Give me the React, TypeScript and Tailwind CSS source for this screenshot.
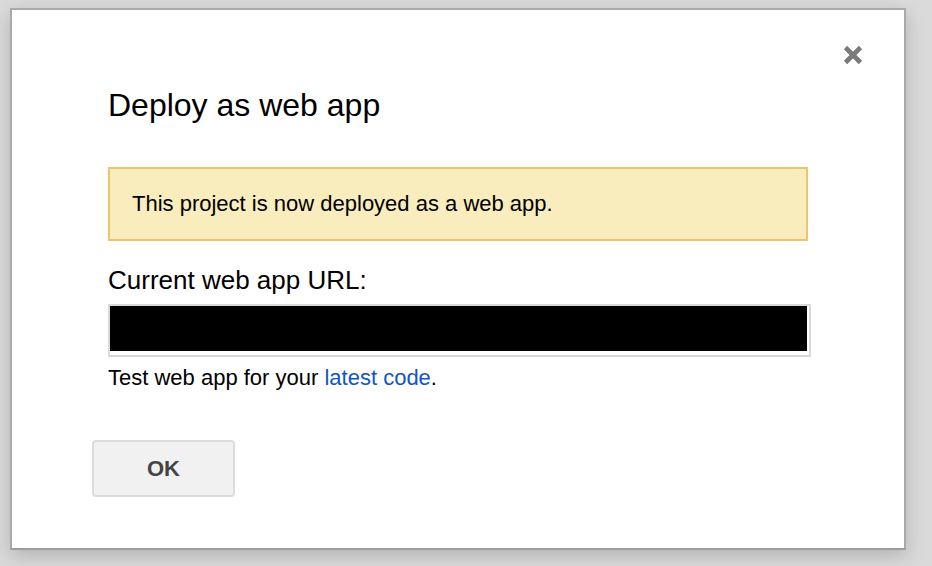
import React from "react";

export default function App() {
  return (
    <div
      className="w-[932px] h-[566px] bg-[#dadada] pt-[8px] pl-[10px] overflow-hidden"
      style={{ fontFamily: '"Liberation Sans", Arial, sans-serif' }}
    >
      <div className="relative w-[896px] h-[542px] bg-white border-2 border-[#a9a9a9] border-b-[#9c9c9c] shadow-[0_6px_18px_rgba(0,0,0,0.18)]">
        <button className="absolute top-[34px] right-[40px] w-[22px] h-[22px] flex items-center justify-center">
          <svg width="22" height="22" viewBox="0 0 22 22">
            <path
              d="M3.5 3.5 L18.5 18.5 M18.5 3.5 L3.5 18.5"
              stroke="#7a7a7a"
              strokeWidth="4.6"
              strokeLinecap="butt"
            />
          </svg>
        </button>

        <div className="pl-[96px] pt-[77px]">
          <h1 className="text-[32px] leading-[36px] text-black font-normal">Deploy as web app</h1>

          <div className="mt-[44px] w-[700px] h-[74px] bg-[#f9edbe] border-2 border-[#f0c36d] flex items-center pl-[22px]">
            <span className="text-[22px] leading-[26px] text-black">
              This project is now deployed as a web app.
            </span>
          </div>

          <div className="mt-[24px] text-[26px] leading-[30px] text-black">Current web app URL:</div>

          <div className="mt-[9px] w-[703px] h-[53px] border-2 border-[#d9d9d9] bg-white pr-[2px] pb-[4px]">
            <div className="w-full h-full bg-black" />
          </div>

          <div className="mt-[8px] text-[22px] leading-[26px] text-black">
            Test web app for your <span className="text-[#1155cc] cursor-pointer">latest code</span>.
          </div>

          <button className="mt-[49px] -ml-[16px] w-[143px] h-[57px] bg-[#f1f1f1] border-2 border-[#dcdcdc] rounded-[4px] flex items-center justify-center text-[22px] font-bold text-[#444]">
            OK
          </button>
        </div>
      </div>
    </div>
  );
}
